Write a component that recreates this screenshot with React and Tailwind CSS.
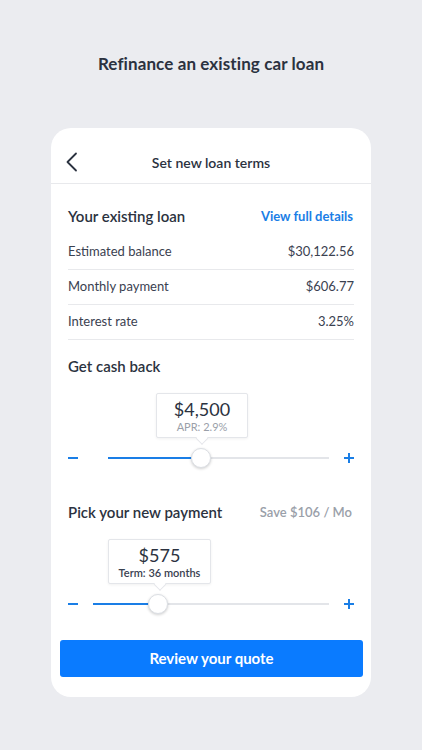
function Tooltip({ offset, width, value, sub, subClass }) {
  return (
    <div className="relative" style={{ marginLeft: offset, width }}>
      <div className="h-[45px] bg-white border border-[#e4e6ea] rounded-[2px] shadow-[0_1px_3px_rgba(0,0,0,0.06)] flex flex-col items-center justify-center">
        <div className="text-[18px] leading-[22px] text-[#2b3240]">{value}</div>
        <div className={"text-[11px] leading-[14px] " + subClass}>{sub}</div>
      </div>
      <div className="absolute left-1/2 -translate-x-1/2 -bottom-[5px] w-[9px] h-[9px] rotate-45 bg-white border-r border-b border-[#e4e6ea]" />
    </div>
  );
}

function Slider({ trackStart, fill }) {
  return (
    <div className="flex items-center h-[20px]">
      <div className="w-[10px] h-[2px] bg-[#1a7ee6]" />
      <div className="relative flex-1 h-[2px] bg-[#e3e5e9] mr-[15px]" style={{ marginLeft: trackStart }}>
        <div className="absolute left-0 top-0 h-[2px] bg-[#1a7ee6]" style={{ width: fill }} />
        <div
          className="absolute top-1/2 -translate-y-1/2 w-[20px] h-[20px] rounded-full bg-white border border-[#dcdfe4] shadow-[0_1px_3px_rgba(0,0,0,0.2)]"
          style={{ left: fill - 1 }}
        />
      </div>
      <div className="relative w-[10px] h-[10px]">
        <div className="absolute left-0 top-[4px] w-[10px] h-[2px] bg-[#1a7ee6]" />
        <div className="absolute left-[4px] top-0 w-[2px] h-[10px] bg-[#1a7ee6]" />
      </div>
    </div>
  );
}

const rows = [
  ["Estimated balance", "$30,122.56"],
  ["Monthly payment", "$606.77"],
  ["Interest rate", "3.25%"],
];

export default function App() {
  return (
    <div className="min-h-[750px] bg-[#ebecf0] font-['Lato','Open_Sans',sans-serif] text-[#2b3240] pt-[53px]">
      <h1 className="text-center text-[17px] leading-[22px] font-bold tracking-[0.1px]">
        Refinance an existing car loan
      </h1>

      <div className="mx-auto mt-[53px] w-[320px] bg-white rounded-[20px] pb-[20px]">
        <div className="relative h-[56px] border-b border-[#e8e9ec] flex items-center justify-center pt-[14px]">
          <svg className="absolute left-[14px] top-[24px]" width="14" height="20" viewBox="0 0 14 20" fill="none">
            <path d="M11 1.5 L2.5 10 L11 18.5" stroke="#2b3240" strokeWidth="1.8" strokeLinecap="round" strokeLinejoin="round" />
          </svg>
          <span className="text-[14px] font-semibold">Set new loan terms</span>
        </div>

        <div className="px-[17px]">
          <div className="flex items-center justify-between pt-[22px] pb-[9px]">
            <span className="text-[15px] leading-[20px] font-semibold">Your existing loan</span>
            <span className="text-[13px] leading-[20px] font-bold text-[#1a7ee6] mr-[1px]">View full details</span>
          </div>

          {rows.map(([label, value]) => (
            <div key={label} className="h-[35px] flex items-center justify-between border-b border-[#e8e9ec] text-[13px] text-[#3a4150]">
              <span>{label}</span>
              <span>{value}</span>
            </div>
          ))}

          <div className="mt-[16px] text-[15px] leading-[20px] font-semibold">Get cash back</div>
          <div className="mt-[17px]">
            <Tooltip offset={88} width={92} value="$4,500" sub="APR: 2.9%" subClass="text-[#9aa0a9]" />
          </div>
          <div className="mt-[10px]">
            <Slider trackStart={30} fill={84} />
          </div>

          <div className="mt-[34px] flex items-center justify-between">
            <span className="text-[15px] leading-[20px] font-semibold">Pick your new payment</span>
            <span className="text-[13px] leading-[20px] font-semibold text-[#9aa0a9] mr-[2px]">Save $106 / Mo</span>
          </div>
          <div className="mt-[17px]">
            <Tooltip offset={40} width={103} value="$575" sub="Term: 36 months" subClass="text-[#3a4150] font-semibold" />
          </div>
          <div className="mt-[10px]">
            <Slider trackStart={15} fill={56} />
          </div>
        </div>

        <div className="px-[9px] pr-[8px] mt-[26px]">
          <button className="w-full h-[37px] rounded-[3px] bg-[#0a7bff] text-white text-[15px] font-bold">
            Review your quote
          </button>
        </div>
      </div>
    </div>
  );
}
